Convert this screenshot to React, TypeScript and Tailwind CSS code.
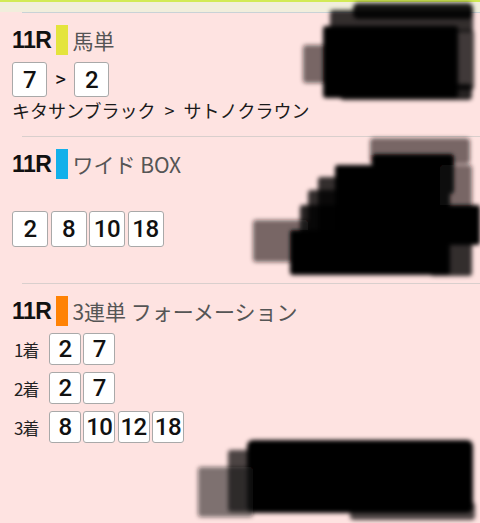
import React from "react";

const jp = { fontFamily: '"Noto Sans CJK JP", "Noto Sans", sans-serif' };
const num = { fontFamily: 'Roboto, "Liberation Sans", sans-serif' };

function Heading({ color, label }: { color: string; label: string }) {
  return (
    <div className="flex items-center h-[30px]">
      <span className="text-[23px] font-bold text-[#111] leading-none tracking-[-0.5px]" style={{ fontFamily: '"Liberation Sans", sans-serif' }}>
        11R
      </span>
      <span className={`ml-[5px] w-[12px] h-[30px] ${color}`} />
      <span className="ml-[4px] text-[21px] text-[#555] leading-none" style={jp}>
        {label}
      </span>
    </div>
  );
}

function Box({ n, size }: { n: string; size: "lg" | "md" | "sm" }) {
  const cls =
    size === "lg"
      ? "w-[35px] h-[35px]"
      : size === "md"
      ? "w-[36px] h-[36px]"
      : "w-[32px] h-[32px]";
  return (
    <div
      className={`${cls} flex items-center justify-center bg-white border border-[#a9a9a9] rounded-[3px] text-[24px] font-medium text-[#111] leading-none tracking-[-0.5px]`}
      style={num}
    >
      {n}
    </div>
  );
}

function Row({ label, nums }: { label: string; nums: string[] }) {
  return (
    <div className="flex items-center h-[32px]">
      <span className="w-[37px] pl-[2px] text-[17px] text-[#222] leading-none tracking-[-1px]" style={jp}>
        {label}
      </span>
      <div className="flex gap-[2.3px]">
        {nums.map((n, i) => (
          <Box key={i} n={n} size="sm" />
        ))}
      </div>
    </div>
  );
}

export default function App() {
  return (
    <div className="relative w-[480px] h-[523px] overflow-hidden bg-[#fee3e1]">
      <div className="h-[12px] bg-[#f1eedc] border-t-2 border-[#d2ea56]" />
      <div className="ml-[22px] h-px bg-[#c9d2d6]" />

      {/* Section 1 */}
      <div className="pl-[12px]">
        <div className="mt-[12px]">
          <Heading color="bg-[#e4e43c]" label="馬単" />
        </div>
        <div className="mt-[7px] flex items-center">
          <Box n="7" size="lg" />
          <span className="w-[27px] text-center text-[21px] text-[#111] leading-none" style={num}>
            &gt;
          </span>
          <Box n="2" size="lg" />
        </div>
        <div className="mt-[2px] h-[22px] flex items-center text-[18px] leading-[22px] text-[#1a1a1a] whitespace-nowrap" style={jp}>
          <span>キタサンブラック</span>
          <span className="mx-[9px]">&gt;</span>
          <span>サトノクラウン</span>
        </div>
      </div>
      <div className="mt-[15px] ml-[22px] h-px bg-[#d9cfcd]" />

      {/* Section 2 */}
      <div className="pl-[12px]">
        <div className="mt-[12px]">
          <Heading color="bg-[#12b0ea]" label="ワイド BOX" />
        </div>
        <div className="mt-[32px] flex gap-[2.5px]">
          {["2", "8", "10", "18"].map((n) => (
            <Box key={n} n={n} size="md" />
          ))}
        </div>
      </div>
      <div className="mt-[36px] ml-[22px] h-px bg-[#d9cfcd]" />

      {/* Section 3 */}
      <div className="pl-[12px]">
        <div className="mt-[12px]">
          <Heading color="bg-[#ff8204]" label="3連単 フォーメーション" />
        </div>
        <div className="mt-[7px] flex flex-col gap-[7px]">
          <Row label="1着" nums={["2", "7"]} />
          <Row label="2着" nums={["2", "7"]} />
          <Row label="3着" nums={["8", "10", "12", "18"]} />
        </div>
      </div>

      {/* redaction scribbles */}
      <svg className="absolute left-0 top-0 pointer-events-none" width="480" height="523" viewBox="0 0 480 523">
        <defs>
          <filter id="bl" x="-20%" y="-20%" width="140%" height="140%">
            <feGaussianBlur stdDeviation="2.2" />
          </filter>
        </defs>
        <g filter="url(#bl)">
          {/* blob 1 */}
          <rect x="353" y="3" width="120" height="16" rx="5" fill="#000" opacity="0.9" />
          <rect x="330" y="10" width="143" height="22" rx="3" fill="#000" opacity="0.8" />
          <rect x="303" y="45" width="30" height="38" rx="3" fill="#1a1010" opacity="0.6" />
          <rect x="323" y="26" width="135" height="72" rx="3" fill="#000" />
          <rect x="440" y="30" width="34" height="60" rx="3" fill="#000" opacity="0.75" />
          <rect x="340" y="84" width="132" height="16" rx="4" fill="#000" opacity="0.85" />
          {/* blob 2 */}
          <rect x="370" y="138" width="100" height="26" rx="4" fill="#1a1010" opacity="0.6" />
          <rect x="372" y="154" width="82" height="40" rx="4" fill="#000" />
          <rect x="335" y="165" width="115" height="110" rx="3" fill="#000" />
          <rect x="318" y="177" width="40" height="95" rx="3" fill="#000" opacity="0.8" />
          <rect x="308" y="190" width="40" height="80" rx="3" fill="#000" opacity="0.8" />
          <rect x="300" y="205" width="40" height="65" rx="3" fill="#000" opacity="0.85" />
          <rect x="253" y="220" width="55" height="42" rx="3" fill="#1a1010" opacity="0.6" />
          <rect x="290" y="230" width="60" height="45" rx="3" fill="#000" />
          <rect x="440" y="165" width="32" height="45" rx="3" fill="#1a1010" opacity="0.6" />
          <rect x="430" y="205" width="50" height="40" rx="3" fill="#000" />
          <rect x="430" y="240" width="42" height="36" rx="3" fill="#000" opacity="0.8" />
          {/* blob 3 */}
          <rect x="247" y="440" width="226" height="73" rx="6" fill="#000" />
          <rect x="228" y="450" width="30" height="62" rx="3" fill="#000" opacity="0.7" />
          <rect x="198" y="467" width="55" height="50" rx="3" fill="#1a1010" opacity="0.55" />
          <rect x="350" y="502" width="125" height="18" rx="4" fill="#000" opacity="0.7" />
        </g>
      </svg>
    </div>
  );
}
